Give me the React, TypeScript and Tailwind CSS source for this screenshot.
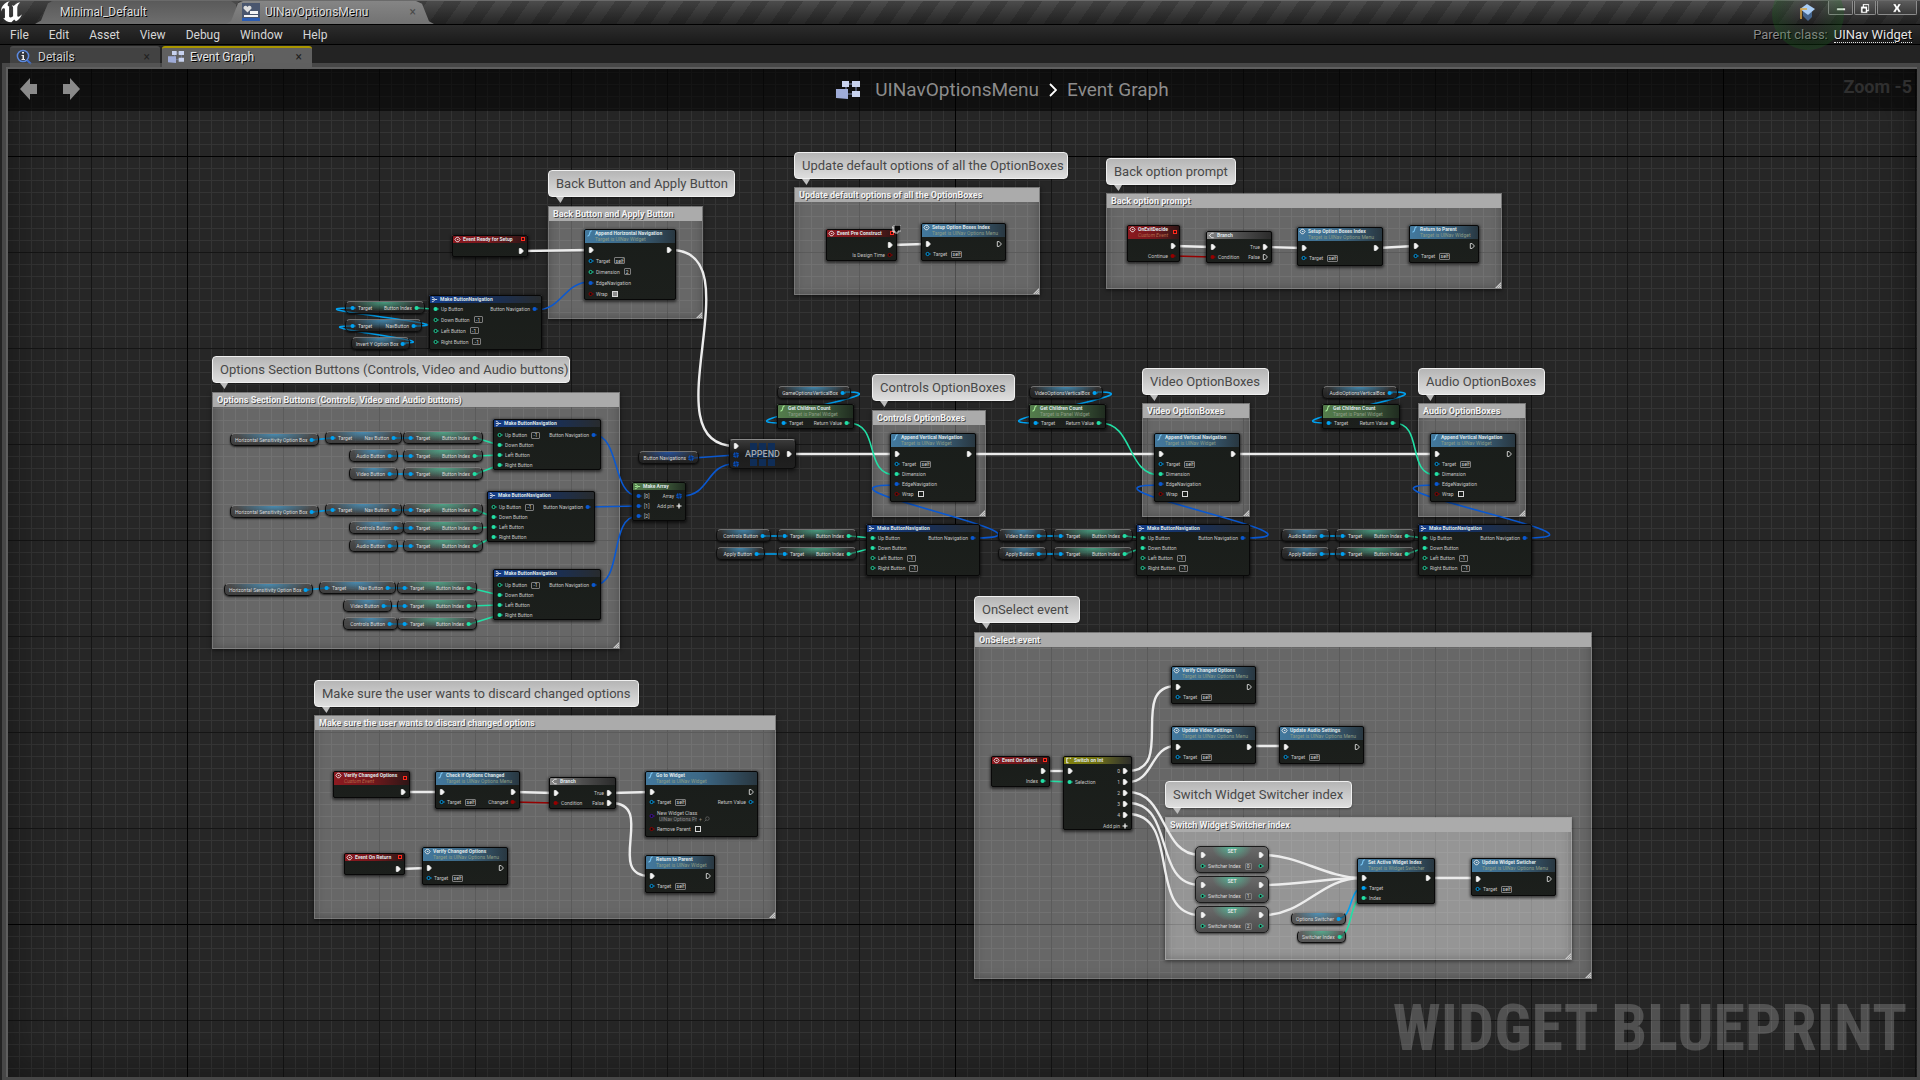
import React from "react";
import { clsx } from "clsx";

type PinColor = "white" | "sky" | "teal" | "blue" | "red" | "purple";

type Pin = {
  label?: string;
  color: PinColor;
  exec?: boolean;
  array?: boolean;
  on?: boolean;
  value?: string;
  check?: boolean;
  picker?: string;
  add?: boolean;
};

type Row = [Pin | null, Pin | null];
type Tone = "red" | "blue" | "navy" | "green" | "gray" | "yellow";
type Glyph = "event" | "fn" | "make" | "branch" | "switch";

type NodeSpec = {
  x: number;
  y: number;
  w: number;
  h: number;
  tone: Tone;
  icon: Glyph;
  title: string;
  sub?: string;
  dot?: boolean;
  row?: 10 | 11;
  pad?: 0 | 1 | 2 | 3 | 4;
  rows: Row[];
};

type PillSpec = {
  x: number;
  y: number;
  w: number;
  tone: "sky" | "teal" | "blue";
  left?: string;
  text: string;
  array?: boolean;
};

type CommentSpec = {
  x: number;
  y: number;
  w: number;
  h: number;
  title: string;
  bubbleY: number;
  bubbleW: number;
};

const hex: Record<PinColor, string> = {
  white: "#f4f4f4",
  sky: "#00a2f2",
  teal: "#22dfa5",
  blue: "#0a58d0",
  red: "#960000",
  purple: "#4a0fa8",
};

const headTone: Record<Tone, string> = {
  red: "bg-linear-to-r from-[#8d1a20] via-[#75171c] to-[#2c1415]",
  blue: "bg-linear-to-r from-[#43799e] via-[#3c6886] to-[#28363f]",
  navy: "bg-linear-to-r from-[#153f8c] via-[#162f5c] to-[#282b2d]",
  green: "bg-linear-to-r from-[#547d4c] via-[#456541] to-[#1f2b1f]",
  gray: "bg-linear-to-r from-[#8a8a8a] via-[#4e4e4e] to-[#2a2a2a]",
  yellow: "bg-linear-to-r from-[#85850f] via-[#6f700f] to-[#2b2b28]",
};

/* ---- pin shorthands ---- */
const X = (on = true, label?: string): Pin => ({ color: "white", exec: true, on, label });
const P = (color: PinColor, label: string, on = false, rest: Partial<Pin> = {}): Pin => ({ color, label, on, ...rest });
const self = (): Pin => P("sky", "Target", false, { value: "self" });
const minus = (label: string): Pin => P("teal", label, false, { value: "-1" });
const addPin: Pin = { color: "white", label: "Add pin", add: true };
const through = (out = true): Row => [X(), X(out)];

const makeNav = (x: number, y: number, w: number, h: number, linked: boolean[], row: 10 | 11, pad: 0 | 1 | 3): NodeSpec => ({
  x, y, w, h, tone: "navy", icon: "make", title: "Make ButtonNavigation", row, pad,
  rows: ["Up Button", "Down Button", "Left Button", "Right Button"].map((label, i): Row => [
    linked[i] ? P("teal", label, true) : minus(label),
    i === 0 ? P("blue", "Button Navigation", true) : null,
  ]),
});

const appendVertical = (x: number, w: number, out: boolean): NodeSpec => ({
  x, y: 433, w, h: 69, tone: "blue", icon: "fn", title: "Append Vertical Navigation", sub: "Target is UINav Widget", pad: 2,
  rows: [
    through(out),
    [self(), null],
    [P("teal", "Dimension", true), null],
    [P("blue", "EdgeNavigation", true), null],
    [P("red", "Wrap", false, { check: false }), null],
  ],
});

const childCount = (x: number, w: number): NodeSpec => ({
  x, y: 404, w, h: 25, tone: "green", icon: "fn", title: "Get Children Count", sub: "Target is Panel Widget", pad: 0,
  rows: [[P("sky", "Target", true), P("teal", "Return Value", true)]],
});

const simple = (x: number, y: number, w: number, h: number, icon: Glyph, title: string, sub: string, out = false): NodeSpec => ({
  x, y, w, h, tone: "blue", icon, title, sub, pad: 2, rows: [through(out), [self(), null]],
});

const MENU = "Target is UINav Options Menu";

const nodes: NodeSpec[] = [
  { x: 452, y: 235, w: 76, h: 22, tone: "red", icon: "event", title: "Event Ready for Setup", dot: true, pad: 3, rows: [[null, X()]] },
  {
    x: 584, y: 229, w: 92, h: 71, tone: "blue", icon: "fn", title: "Append Horizontal Navigation", sub: "Target is UINav Widget", row: 11, pad: 1,
    rows: [
      through(),
      [self(), null],
      [P("teal", "Dimension", false, { value: "2" }), null],
      [P("blue", "EdgeNavigation", true), null],
      [P("red", "Wrap", false, { check: true }), null],
    ],
  },
  makeNav(429, 295, 113, 55, [true, false, false, false], 11, 0),
  { x: 826, y: 229, w: 71, h: 32, tone: "red", icon: "event", title: "Event Pre Construct", dot: true, pad: 3, rows: [[null, X()], [null, P("red", "Is Design Time")]] },
  simple(921, 223, 85, 38, "event", "Setup Option Boxes Index", MENU),
  { x: 1127, y: 225, w: 53, h: 37, tone: "red", icon: "event", title: "OnExitDecide", sub: "Custom Event", dot: true, pad: 2, rows: [[null, X()], [null, P("red", "Continue", true)]] },
  { x: 1206, y: 231, w: 66, h: 32, tone: "gray", icon: "branch", title: "Branch", pad: 3, rows: [[X(), X(true, "True")], [P("red", "Condition", true), X(false, "False")]] },
  simple(1297, 227, 86, 39, "event", "Setup Option Boxes Index", MENU, true),
  simple(1409, 225, 70, 38, "fn", "Return to Parent", "Target is UINav Widget"),
  makeNav(493, 419, 108, 51, [false, true, true, true], 10, 3),
  makeNav(487, 491, 108, 51, [false, true, true, true], 10, 3),
  makeNav(493, 569, 108, 51, [false, true, true, true], 10, 3),
  {
    x: 632, y: 482, w: 54, h: 39, tone: "green", icon: "make", title: "Make Array", pad: 1,
    rows: [
      [P("blue", "[0]", true), P("blue", "Array", true, { array: true })],
      [P("blue", "[1]", true), addPin],
      [P("blue", "[2]", true), null],
    ],
  },
  childCount(777, 77),
  childCount(1029, 77),
  childCount(1322, 78),
  appendVertical(890, 86, true),
  appendVertical(1154, 86, true),
  appendVertical(1430, 86, false),
  makeNav(866, 524, 114, 52, [true, true, false, false], 10, 1),
  makeNav(1136, 524, 114, 52, [true, true, false, false], 10, 1),
  makeNav(1418, 524, 114, 52, [true, true, false, false], 10, 1),
  { x: 333, y: 771, w: 77, h: 27, tone: "red", icon: "event", title: "Verify Changed Options", sub: "Custom Event", dot: true, pad: 2, rows: [[null, X()]] },
  {
    x: 435, y: 771, w: 85, h: 38, tone: "blue", icon: "fn", title: "Check if Options Changed", sub: MENU, pad: 2,
    rows: [through(), [self(), P("red", "Changed", true)]],
  },
  { x: 549, y: 777, w: 67, h: 32, tone: "gray", icon: "branch", title: "Branch", pad: 3, rows: [[X(), X(true, "True")], [P("red", "Condition", true), X(true, "False")]] },
  {
    x: 645, y: 771, w: 113, h: 66, tone: "blue", icon: "fn", title: "Go to Widget", sub: "Target is UINav Widget", pad: 2,
    rows: [
      through(false),
      [self(), P("sky", "Return Value")],
      [P("purple", "New Widget Class", false, { picker: "UINav Options Pr" }), null],
      [P("red", "Remove Parent", false, { check: false }), null],
    ],
  },
  { x: 344, y: 853, w: 61, h: 22, tone: "red", icon: "event", title: "Event On Return", dot: true, pad: 3, rows: [[null, X()]] },
  simple(422, 847, 86, 38, "event", "Verify Changed Options", MENU),
  simple(645, 855, 70, 38, "fn", "Return to Parent", "Target is UINav Widget"),
  simple(1171, 666, 85, 38, "event", "Verify Changed Options", MENU),
  simple(1171, 726, 85, 38, "event", "Update Video Settings", MENU, true),
  simple(1279, 726, 85, 38, "event", "Update Audio Settings", MENU),
  { x: 991, y: 756, w: 59, h: 31, tone: "red", icon: "event", title: "Event On Select", dot: true, pad: 2, rows: [[null, X()], [null, P("teal", "Index", true)]] },
  {
    x: 1063, y: 756, w: 69, h: 74, tone: "yellow", icon: "switch", title: "Switch on Int", row: 11, pad: 1,
    rows: [
      [X(), X(true, "0")],
      [P("teal", "Selection", true), X(true, "1")],
      [null, X(true, "2")],
      [null, X(true, "3")],
      [null, X(true, "4")],
      [null, addPin],
    ],
  },
  {
    x: 1357, y: 858, w: 78, h: 46, tone: "blue", icon: "fn", title: "Set Active Widget Index", sub: "Target is Widget Switcher", pad: 1,
    rows: [through(), [P("sky", "Target", true), null], [P("teal", "Index", true), null]],
  },
  simple(1471, 858, 85, 38, "event", "Update Widget Swticher", MENU),
];

const idx = (x: number, y: number, w = 80): PillSpec => ({ x, y, w, tone: "teal", left: "Target", text: "Button Index" });
const ref = (x: number, y: number, w: number, text: string): PillSpec => ({ x, y, w, tone: "sky", text });

const pills: PillSpec[] = [
  idx(345, 301),
  { x: 345, y: 319, w: 77, tone: "sky", left: "Target", text: "NavButton" },
  ref(351, 337, 59, "Invert Y Option Box"),
  ref(230, 433, 89, "Horizontal Sensitivity Option Box"),
  { x: 325, y: 431, w: 77, tone: "sky", left: "Target", text: "Nav Button" },
  idx(403, 431), ref(349, 449, 49, "Audio Button"), idx(403, 449), ref(349, 467, 49, "Video Button"), idx(403, 467),
  ref(230, 505, 89, "Horizontal Sensitivity Option Box"),
  { x: 325, y: 503, w: 77, tone: "sky", left: "Target", text: "Nav Button" },
  idx(403, 503), ref(349, 521, 55, "Controls Button"), idx(403, 521), ref(349, 539, 49, "Audio Button"), idx(403, 539),
  ref(224, 583, 89, "Horizontal Sensitivity Option Box"),
  { x: 319, y: 581, w: 77, tone: "sky", left: "Target", text: "Nav Button" },
  idx(397, 581), ref(343, 599, 49, "Video Button"), idx(397, 599), ref(343, 617, 55, "Controls Button"), idx(397, 617),
  { x: 638, y: 451, w: 61, tone: "blue", text: "Button Navigations", array: true },
  ref(777, 386, 74, "GameOptionsVerticalBox"), ref(1029, 386, 74, "VideoOptionsVerticalBox"), ref(1322, 386, 76, "AudioOptionsVerticalBox"),
  ref(716, 529, 55, "Controls Button"), ref(716, 547, 49, "Apply Button"), idx(777, 529), idx(777, 547),
  ref(998, 529, 49, "Video Button"), ref(998, 547, 49, "Apply Button"), idx(1053, 529), idx(1053, 547),
  ref(1281, 529, 49, "Audio Button"), ref(1281, 547, 49, "Apply Button"), idx(1335, 529), idx(1335, 547),
  ref(1291, 912, 55, "Options Switcher"),
  { x: 1297, y: 930, w: 49, tone: "teal", text: "Switcher Index" },
];

const setters = [
  { y: 846, value: "0" },
  { y: 876, value: "1" },
  { y: 906, value: "2" },
];

const comments: CommentSpec[] = [
  { x: 548, y: 206, w: 155, h: 113, title: "Back Button and Apply Button", bubbleY: 170, bubbleW: 187 },
  { x: 794, y: 187, w: 246, h: 108, title: "Update default options of all the OptionBoxes", bubbleY: 152, bubbleW: 274 },
  { x: 1106, y: 193, w: 396, h: 96, title: "Back option prompt", bubbleY: 158, bubbleW: 130 },
  { x: 212, y: 392, w: 408, h: 257, title: "Options Section Buttons (Controls, Video and Audio buttons)", bubbleY: 356, bubbleW: 358 },
  { x: 872, y: 410, w: 114, h: 107, title: "Controls OptionBoxes", bubbleY: 374, bubbleW: 143 },
  { x: 1142, y: 403, w: 108, h: 114, title: "Video OptionBoxes", bubbleY: 368, bubbleW: 127 },
  { x: 1418, y: 403, w: 108, h: 114, title: "Audio OptionBoxes", bubbleY: 368, bubbleW: 127 },
  { x: 314, y: 715, w: 462, h: 204, title: "Make sure the user wants to discard changed options", bubbleY: 680, bubbleW: 325 },
  { x: 974, y: 632, w: 618, h: 347, title: "OnSelect event", bubbleY: 596, bubbleW: 106 },
  { x: 1165, y: 817, w: 407, h: 143, title: "Switch Widget Switcher index", bubbleY: 781, bubbleW: 187 },
];

const line = (x1: number, y1: number, x2: number, y2: number) => `M${x1} ${y1}L${x2} ${y2}`;
const curve = (x1: number, y1: number, x2: number, y2: number, a: number, b = a) =>
  `M${x1} ${y1}C${x1 + a} ${y1} ${x2 - b} ${y2} ${x2} ${y2}`;

const wires: { color: PinColor; width: number; paths: string[] }[] = [
  {
    color: "white", width: 2,
    paths: [
      line(523, 251, 590, 250),
      curve(671, 250, 735, 446, 86, 88),
      line(792, 454, 895, 454), line(972, 454, 1159, 454), line(1236, 454, 1435, 454),
      line(891, 245, 925, 244), line(1175, 246, 1211, 247), line(1267, 247, 1302, 248), line(1378, 248, 1414, 246),
      line(405, 792, 440, 792), line(515, 792, 554, 793), line(611, 793, 650, 792), line(400, 869, 427, 868),
      curve(611, 803, 650, 876, 46),
      line(1045, 771, 1068, 771), line(1251, 746, 1284, 746),
      curve(1128, 771, 1176, 686, 48), curve(1128, 782, 1176, 746, 26),
      curve(1128, 792, 1200, 855, 40), curve(1128, 803, 1200, 885, 48), curve(1128, 814, 1200, 915, 54),
      curve(1264, 855, 1361, 878, 34), curve(1264, 885, 1361, 878, 34), curve(1264, 915, 1361, 878, 40),
      line(1430, 878, 1476, 878),
    ],
  },
  { color: "red", width: 1, paths: [line(1175, 256, 1211, 257), line(514, 802, 554, 803)] },
  {
    color: "sky", width: 1,
    paths: [
      curve(413, 326, 351, 308, 68), curve(402, 343, 351, 326, 54),
      line(312, 440, 331, 438), line(395, 438, 409, 438), line(391, 456, 409, 456), line(391, 474, 409, 474),
      line(312, 512, 331, 510), line(395, 510, 409, 510), line(396, 528, 409, 528), line(391, 546, 409, 546),
      line(306, 590, 325, 588), line(389, 588, 403, 588), line(385, 606, 403, 606), line(390, 624, 403, 624),
      curve(845, 392, 781, 423, 68), curve(1097, 392, 1033, 423, 68), curve(1391, 392, 1327, 423, 68),
      line(764, 536, 782, 536), line(758, 554, 782, 554),
      line(1040, 536, 1058, 536), line(1040, 554, 1058, 554), line(1322, 536, 1340, 536), line(1322, 554, 1340, 554),
      curve(1339, 918, 1363, 888, 14),
    ],
  },
  {
    color: "teal", width: 1,
    paths: [
      line(417, 308, 434, 309),
      line(476, 438, 499, 445), line(476, 456, 499, 455), line(476, 474, 499, 465),
      line(476, 510, 493, 517), line(476, 528, 493, 527), line(476, 546, 493, 537),
      line(470, 588, 499, 595), line(470, 606, 499, 605), line(470, 624, 499, 615),
      curve(848, 423, 896, 475, 34), curve(1100, 423, 1160, 475, 34), curve(1394, 423, 1436, 475, 30),
      line(849, 536, 872, 538), line(849, 554, 872, 548),
      line(1125, 536, 1142, 538), line(1125, 554, 1142, 548),
      line(1407, 536, 1424, 538), line(1407, 554, 1424, 548),
      line(1045, 781, 1068, 782), curve(1339, 936, 1363, 898, 14),
    ],
  },
  {
    color: "blue", width: 1,
    paths: [
      curve(536, 310, 590, 282, 26),
      curve(975, 538, 896, 485, 105), curve(1245, 538, 1160, 485, 105), curve(1527, 538, 1436, 485, 105),
      curve(594, 435, 638, 496, 26), line(588, 507, 638, 506), curve(594, 585, 638, 516, 30),
      line(694, 458, 734, 455), curve(682, 496, 734, 464, 28),
    ],
  },
];

function PinMark({ pin }: { pin: Pin }) {
  const c = hex[pin.color];
  if (pin.exec) {
    return (
      <svg viewBox="0 0 6 6" className="size-1.5 shrink-0" aria-hidden="true">
        <path d="M1.3 .6H3.2L5.4 3 3.2 5.4H1.3Z" fill={pin.on ? c : "none"} stroke={c} strokeWidth=".8" strokeLinejoin="round" />
      </svg>
    );
  }
  if (pin.array) {
    return (
      <svg viewBox="0 0 6 6" className="size-1.5 shrink-0" aria-hidden="true">
        <path d="M1 1H5V5H1Z" fill="#0a2f6b" stroke={c} strokeWidth="1.2" strokeDasharray="1.4 .6" />
      </svg>
    );
  }
  return (
    <svg viewBox="0 0 6 6" className="size-1.5 shrink-0" aria-hidden="true">
      <circle cx="2.6" cy="3" r={pin.on ? 2.1 : 1.6} fill={pin.on ? c : "#0b0f0d"} stroke={c} strokeWidth={pin.on ? 0 : 0.9} />
      <path d="M4.7 2.1L5.9 3 4.7 3.9Z" fill={c} />
    </svg>
  );
}

function PinView({ pin, side }: { pin: Pin | null; side: "in" | "out" }) {
  if (!pin) return <span />;
  if (pin.add) {
    return (
      <button type="button" className="flex items-center gap-0.5">
        {pin.label}
        <svg viewBox="0 0 6 6" className="size-1.5" aria-hidden="true">
          <path d="M3 .5V5.5M.5 3H5.5" stroke="#fff" strokeWidth="1.2" />
        </svg>
      </button>
    );
  }
  return (
    <div className={clsx("flex items-center gap-0.5", side === "out" && "flex-row-reverse")}>
      <PinMark pin={pin} />
      {pin.picker ? (
        <div className="flex flex-col leading-[6px]">
          <span>{pin.label}</span>
          <span className="ml-0.5 flex items-center gap-0.5 text-[#8b8b8b]">
            <select aria-label={pin.label} className="h-1.5 w-[38px] appearance-none bg-[#2a2d2b] leading-[6px] text-[#8b8b8b]">
              <option>{pin.picker}</option>
            </select>
            +
            <svg viewBox="0 0 6 6" className="size-1.5" aria-hidden="true">
              <circle cx="3.4" cy="2.6" r="1.8" fill="none" stroke="#6b6b6b" strokeWidth=".7" />
              <path d="M2 4L.6 5.4" stroke="#6b6b6b" strokeWidth=".8" />
            </svg>
          </span>
        </div>
      ) : (
        pin.label && <span>{pin.label}</span>
      )}
      {pin.value && (
        <input
          aria-label={`${pin.label} value`}
          defaultValue={pin.value}
          className={clsx(
            "ml-0.5 h-[7px] rounded-[1px] border border-[#7c7c7c] bg-transparent p-0 text-center text-[5px] leading-[5px] text-[#d8d8d8]",
            pin.value === "self" ? "w-[11px]" : pin.value === "-1" ? "w-[9px]" : "w-[7px]",
          )}
        />
      )}
      {pin.check !== undefined && (
        <input
          type="checkbox"
          aria-label={pin.label}
          defaultChecked={pin.check}
          className="ml-0.5 size-1.5 appearance-none border border-[#d6d6d6] bg-transparent checked:bg-[#8c8c8c]"
        />
      )}
    </div>
  );
}

function NodeGlyph({ icon, tone }: { icon: Glyph; tone: Tone }) {
  const c = tone === "green" ? "#a9f09a" : icon === "fn" ? "#7cc8f5" : "#e8e8e8";
  return (
    <svg viewBox="0 0 8 8" className="size-[7px] shrink-0" fill="none" stroke={c} strokeWidth="1" aria-hidden="true">
      {icon === "event" && <path d="M3 1.4L1 4 3 6.6M5 1.4L7 4 5 6.6M3 1.4H5M3 6.6H5M3.4 4H5" />}
      {icon === "fn" && <path d="M6.6 1.2C4.6.6 4.6 2.4 4.2 4S3.6 7.2 1.6 6.8" strokeWidth="1.2" />}
      {icon === "make" && <path d="M1 1.5H2.5L4.5 4H7M1 4H4M1 6.5H2.5L4.5 4" />}
      {icon === "branch" && <path d="M6.5 1.4H4L1.8 4 4 6.6H6.5M1 4H2" />}
      {icon === "switch" && <path d="M4 1.5H2V6.5H4M5.2 1.5H7" strokeWidth="1.2" />}
    </svg>
  );
}

function GraphNode({ n }: { n: NodeSpec }) {
  return (
    <article
      className="absolute flex flex-col overflow-hidden rounded-[2px] bg-linear-to-b from-[#191d1a] to-[#1c1f1c] text-[5px] leading-[6px] whitespace-nowrap text-[#c4c4c4] shadow-[0_1px_3px_1px_rgba(0,0,0,0.6)] outline -outline-offset-1 outline-[#080808]"
      style={{ left: n.x, top: n.y, width: n.w, height: n.h }}
    >
      <header
        className={clsx(
          "flex shrink-0 items-start gap-0.5 border-t border-white/20 pl-0.5",
          headTone[n.tone],
          n.sub ? "h-3.5" : "h-2",
        )}
      >
        <NodeGlyph icon={n.icon} tone={n.tone} />
        <div className="flex flex-1 flex-col font-bold text-[#dfe5e8]">
          <h3>{n.title}</h3>
          {n.sub && <p className={clsx("font-normal", n.tone === "red" ? "text-[#b06a4a] italic" : "text-[#8d9d86]")}>{n.sub}</p>}
        </div>
        {n.dot && <span className={clsx("mr-[3px] size-1 border border-[#ff2a1c] bg-[#3a0a0a]", n.sub ? "mt-1" : "mt-px")} />}
      </header>
      <div
        className={clsx(
          "flex flex-col px-1",
          n.pad === 1 && "pt-px",
          n.pad === 2 && "pt-0.5",
          n.pad === 3 && "pt-[3px]",
        )}
      >
        {n.rows.map(([i, o], k) => (
          <div
            key={k}
            className={clsx("flex items-center justify-between", i?.picker ? "h-[17px]" : n.row === 11 ? "h-[11px]" : "h-2.5")}
          >
            <PinView pin={i} side="in" />
            <PinView pin={o} side="out" />
          </div>
        ))}
      </div>
    </article>
  );
}

const pillTone = {
  sky: "bg-[radial-gradient(ellipse_at_top,rgba(70,160,210,0.75),transparent_62%),linear-gradient(#3c3c3c99,#1a1a1a88)]",
  teal: "bg-[radial-gradient(ellipse_at_top,rgba(80,200,160,0.7),transparent_62%),linear-gradient(#3c3c3c99,#1a1a1a88)]",
  blue: "bg-[radial-gradient(ellipse_at_top,rgba(30,90,190,0.75),transparent_62%),linear-gradient(#3c3c3c99,#1a1a1a88)]",
};

function Pill({ p }: { p: PillSpec }) {
  return (
    <div
      className={clsx(
        "absolute flex h-[13px] items-center justify-between rounded-[5px] border border-t-[#a9a9a9]/60 border-[#0d0d0d] px-1 text-[5px] leading-[6px] whitespace-nowrap text-[#d8d8d8] shadow-[0_1px_2px_rgba(0,0,0,0.7)]",
        pillTone[p.tone],
      )}
      style={{ left: p.x, top: p.y, width: p.w }}
    >
      {p.left && (
        <span className="flex items-center gap-0.5">
          <PinMark pin={{ color: "sky", on: true }} />
          {p.left}
        </span>
      )}
      <span className="ml-auto flex items-center gap-0.5">
        {p.text}
        <PinMark pin={{ color: p.tone, on: true, array: p.array }} />
      </span>
    </div>
  );
}

function Setter({ y, value }: { y: number; value: string }) {
  return (
    <article
      className="absolute left-[1195px] flex h-[27px] w-[74px] flex-col rounded-[5px] border border-[#1b1b1b] bg-[radial-gradient(ellipse_at_top,rgba(80,200,160,0.8),transparent_40%),linear-gradient(#6a6a6a,#4c4c4c)] px-1 text-[5px] leading-[6px] text-[#dedede] shadow-[0_1px_3px_rgba(0,0,0,0.7)]"
      style={{ top: y }}
    >
      <h3 className="h-1 pt-px text-center font-bold">SET</h3>
      <div className="flex h-2 items-center justify-between">
        <PinMark pin={X()} />
        <PinMark pin={X()} />
      </div>
      <div className="mt-0.5 flex h-2.5 items-center justify-between">
        <PinView pin={P("teal", "Switcher Index", false, { value })} side="in" />
        <PinMark pin={{ color: "teal" }} />
      </div>
    </article>
  );
}

function AppendNode() {
  return (
    <article className="absolute top-[439px] left-[729px] flex h-[30px] w-[67px] items-center justify-between rounded-[4px] border border-t-[#8a8a8a] border-[#0c0c0c] bg-linear-to-b from-[#3a3a3a] via-[#1c1c1c] to-[#202020] px-[3px] shadow-[0_1px_4px_1px_rgba(0,0,0,0.6)]">
      <div className="flex h-full flex-col gap-[3px] pt-[3px]">
        <PinMark pin={X()} />
        <PinMark pin={{ color: "blue", array: true }} />
        <PinMark pin={{ color: "blue", array: true }} />
      </div>
      <div className="grid place-items-center">
        <div className="col-start-1 row-start-1 grid grid-cols-3 gap-x-0.5 gap-y-px">
          {Array.from({ length: 9 }, (_, i) => (
            <span key={i} className="size-[7px] bg-[#0f2d57]" />
          ))}
        </div>
        <h3 className="col-start-1 row-start-1 text-[9px] leading-3 font-medium text-[#a3a8ae]">APPEND</h3>
      </div>
      <PinMark pin={X()} />
    </article>
  );
}

function CommentBox({ c }: { c: CommentSpec }) {
  return (
    <section
      className="absolute border border-white/10 bg-white/30 shadow-[0_1px_4px_rgba(0,0,0,0.6),inset_0_0_10px_rgba(0,0,0,0.25)]"
      style={{ left: c.x, top: c.y, width: c.w, height: c.h }}
    >
      <h2 className="h-3.5 overflow-hidden bg-[#ababab] pl-1 text-[9px] leading-[14px] font-bold whitespace-nowrap text-[#f2f2f2] [text-shadow:1px_1px_0_#4a4a4a]">
        {c.title}
      </h2>
      <svg viewBox="0 0 6 6" className="absolute right-0 bottom-0 size-1.5" aria-hidden="true">
        <path d="M6 0V6H0Z" fill="#c9c9c9" />
        <path d="M6 2L2 6M6 4L4 6" stroke="#777" strokeWidth=".6" />
      </svg>
    </section>
  );
}

function Bubble({ c }: { c: CommentSpec }) {
  return (
    <div className="absolute" style={{ left: c.x, top: c.bubbleY, width: c.bubbleW }}>
      <p className="h-[27px] rounded-[4px] border border-[#f0f0f0] bg-linear-to-b from-[#b5b5b5] to-[#dedede] pl-[7px] text-[13px] leading-[25px] whitespace-nowrap text-[#484848] shadow-[0_1px_2px_rgba(0,0,0,0.4)]">
        {c.title}
      </p>
      <svg viewBox="0 0 8 6" className="ml-2 h-1.5 w-2" aria-hidden="true">
        <path d="M0 0H8L4.5 6Z" fill="#bdbdbd" />
      </svg>
    </div>
  );
}

function GraphIcon({ className }: { className: string }) {
  return (
    <svg viewBox="0 0 24 20" className={className} aria-hidden="true">
      <path d="M12 4H18M12 14H18M10 4V14M20 4V14" stroke="#7f8db5" strokeWidth="1" />
      <path d="M6 1H13V7H6ZM16 1H24V7H16ZM16 11H24V17H16Z" fill="#c8d2ee" />
      <path d="M0 9H12V19L0 18Z" fill="#9facd8" />
    </svg>
  );
}

function Arrow({ flip }: { flip?: boolean }) {
  return (
    <svg viewBox="0 0 18 24" className={clsx("h-6 w-[18px]", flip && "-scale-x-100")} aria-hidden="true">
      <path d="M0 12L10 1V7H17V17H10V23Z" fill="#8a8a8a" />
    </svg>
  );
}

const shade = "[text-shadow:1px_1px_0_#000]";

function TitleBar() {
  return (
    <header className="relative flex h-[25px] items-end border-t border-b border-t-[#6a6a6a] border-b-black bg-[repeating-linear-gradient(125deg,rgba(0,0,0,0.16)_0_14px,transparent_14px_28px),linear-gradient(#4c4c4c,#262626)]">
      <svg viewBox="4 5 16 15" className="mr-3 h-[23px] w-[23px] shrink-0 self-center" aria-label="Unreal Engine" role="img">
        <path
          fill="#fff"
          d="M19.13 13.729c-.206.997-1.126 3.557-4.06 4.942l-1.179-1.325-1.988 2a7.338 7.338 0 01-5.804-2.978 2.859 2.859 0 00.65.123c.326.006.678-.114.678-.66v-5.394a.89.89 0 00-1.116-.89c-.92.212-1.656 2.509-1.656 2.509a7.304 7.304 0 012.528-5.597 7.408 7.408 0 013.73-1.721c-1.006.573-1.57 1.507-1.57 2.29 0 1.262.76 1.109.984.923v7.28a1.157 1.157 0 00.148.256 1.075 1.075 0 00.88.445c.76 0 1.747-.868 1.747-.868V9.172c0-.6-.452-1.324-.905-1.572 0 0 .838-.149 1.484.346a5.537 5.537 0 01.387-.425c1.508-1.48 2.929-1.902 4.112-2.112 0 0-2.151 1.69-2.151 3.96 0 1.687.043 5.801.043 5.801.799.771 1.986-.342 3.059-1.441z"
        />
      </svg>
      <nav className="flex h-full text-xs text-[#dcdcdc]" aria-label="Open assets">
        <button
          type="button"
          className={clsx(
            "flex h-full w-[205px] items-center bg-linear-to-b from-[#5a5a5a] to-[#6e6e6e] pb-px pl-[25px] [clip-path:polygon(0_100%,6px_85%,13px_10%,18px_0,196px_0,201px_15%,205px_100%)]",
            shade,
          )}
        >
          Minimal_Default
        </button>
        <button
          type="button"
          className={clsx(
            "-ml-3.5 flex h-full w-[208px] items-center gap-[5px] bg-linear-to-b from-[#858585] to-[#727272] pr-[18px] pb-px pl-[16px] [clip-path:polygon(0_100%,5px_88%,12px_10%,17px_0,190px_0,196px_12%,203px_88%,208px_100%)]",
            shade,
          )}
        >
          <svg viewBox="0 0 18 18" className="size-[18px]" aria-hidden="true">
            <path d="M0 0H18V18H0Z" fill="#4a566e" />
            <path d="M0 15H18V18H0Z" fill="#2c5cb0" />
            <path d="M5.5 9.5L1.5 5.5C1 3 4 1.5 5.5 4 7 1.5 10 3 9.5 5.5Z" fill="#dedede" />
            <path d="M8 8H16V11H8ZM2 12H16V14H2Z" fill="#f4f4f4" />
          </svg>
          UINavOptionsMenu
          <span className="ml-auto text-[#4a4a4a] [text-shadow:none]">×</span>
        </button>
      </nav>
      <div className="ml-auto flex h-full gap-px">
        <button type="button" aria-label="Tutorials" className="mr-3 flex items-center">
          <svg viewBox="0 0 16 18" className="h-[18px] w-4" aria-hidden="true">
            <path d="M4 7L13 8V13L9 17 4 12Z" fill="#44648c" />
            <path d="M1 5L8 0 16 5 9 11Z" fill="#a9cdf5" />
            <path d="M8 5L2 5V15" fill="none" stroke="#d9a441" strokeWidth="1.5" />
          </svg>
        </button>
        {[
          { name: "Minimize", w: "w-[25px]", d: "M3 7H13V10H3Z" },
          { name: "Restore", w: "w-[22px]", d: "M5 2H13V11H11V13H3V5H5ZM7 4V5H11V9H11.5V4ZM5.5 8V11H8.5V8Z" },
          { name: "Close", w: "w-10", d: "M3 2H6.5L8 5 9.5 2H13L10 7 13 12H9.5L8 9 6.5 12H3L6 7Z" },
        ].map((b) => (
          <button
            key={b.name}
            type="button"
            aria-label={b.name}
            className={clsx("flex h-3.5 items-center justify-center rounded-b-[2px] border border-t-0 border-[#8c8c8c] bg-linear-to-b from-[#5c5c5c] to-[#3a3a3a]", b.w)}
          >
            <svg viewBox="0 0 16 14" className="h-3 w-3.5" aria-hidden="true">
              <path d={b.d} fill="#fff" fillRule="evenodd" stroke="#111" strokeWidth=".5" />
            </svg>
          </button>
        ))}
        <span className="w-0.5" />
      </div>
      <span className="pointer-events-none absolute -top-[23px] right-[76px] size-[72px] rounded-full bg-[radial-gradient(circle,rgba(20,90,20,0)_20%,rgba(20,110,25,0.4)_100%)]" />
    </header>
  );
}

function PanelTab({ active, label, icon }: { active?: boolean; label: string; icon: React.ReactNode }) {
  return (
    <button
      type="button"
      role="tab"
      aria-selected={!!active}
      className={clsx(
        "flex h-[21px] w-[150px] items-center gap-1.5 rounded-t-[3px] border-t-2 pr-2.5 pb-0.5 pl-1.5 text-xs",
        shade,
        active ? "border-t-[#a89400] bg-[#606060] text-[#e6e6e6]" : "border-t-[#4a4a4a] bg-[#424242] text-[#cfcfcf]",
      )}
    >
      {icon}
      {label}
      <span className="ml-auto text-[#222] [text-shadow:none]">×</span>
    </button>
  );
}

export default function App() {
  return (
    <div className="flex h-screen flex-col overflow-hidden bg-[#232323] font-['Roboto',sans-serif]">
      <TitleBar />
      <div className={clsx("flex h-5 items-center border-b border-black bg-linear-to-b from-[#2c2c2c] to-[#1a1a1a] pr-2 pl-2.5 text-xs text-[#d6d6d6]", shade)}>
        <nav className="flex gap-5" aria-label="Main menu">
          {["File", "Edit", "Asset", "View", "Debug", "Window", "Help"].map((m) => (
            <button key={m} type="button">
              {m}
            </button>
          ))}
        </nav>
        <p className="ml-auto text-[13px] leading-4 text-[#8a8a8a]">
          Parent class:
          <a href="#parent" className="ml-1.5 border-b border-dotted border-[#e4e4e4] text-[#e4e4e4]">
            UINav Widget
          </a>
        </p>
      </div>
      <div role="tablist" className="flex h-[22px] items-end gap-0.5 pl-2.5">
        <PanelTab
          label="Details"
          icon={
            <svg viewBox="0 0 16 16" className="size-4" aria-hidden="true">
              <path d="M11 11L15 15" stroke="#3f6fd0" strokeWidth="2" />
              <circle cx="7" cy="7" r="5.6" fill="#33363c" stroke="#5c8ae0" strokeWidth="1.5" />
              <path d="M6 3H8V4.5H6ZM5.5 6H8V10H9V11H5.500V10H6.5V7H5.5Z" fill="#eee" />
            </svg>
          }
        />
        <PanelTab active label="Event Graph" icon={<GraphIcon className="h-3.5 w-4" />} />
      </div>
      <main className="relative mr-[3px] mb-[3px] ml-1.5 flex-1 overflow-hidden border-t-2 border-l-2 border-[#5f5f5f] bg-[#262626] outline-4 outline-[#5f5f5f]/60">
        <div className="absolute inset-0 bg-[linear-gradient(90deg,#000_1px,transparent_1px),linear-gradient(#000_1px,transparent_1px),linear-gradient(90deg,#151515_1px,transparent_1px),linear-gradient(#151515_1px,transparent_1px),linear-gradient(90deg,#343434_1px,transparent_1px),linear-gradient(#343434_1px,transparent_1px)] bg-size-[768px_768px,768px_768px,96px_96px,96px_96px,12px_12px,12px_12px] bg-position-[179px_0,0_87px,83px_0,0_87px,11px_0,0_3px]" />

        <div className="absolute -top-[69px] -left-2 h-[1080px] w-[1920px]">
          {comments.map((c) => (
            <CommentBox key={c.title} c={c} />
          ))}
          <svg viewBox="0 0 1920 1080" className="absolute inset-0 h-[1080px] w-[1920px]" fill="none" aria-hidden="true">
            {wires.map((g) => (
              <g key={g.color} stroke={g.color === "white" ? "#ececec" : hex[g.color]} strokeWidth={g.width === 2 ? 2.4 : 1.6}>
                {g.paths.map((d) => (
                  <path key={d} d={d} />
                ))}
              </g>
            ))}
          </svg>
          {pills.map((p) => (
            <Pill key={`${p.x}-${p.y}`} p={p} />
          ))}
          {nodes.map((n) => (
            <GraphNode key={`${n.x}-${n.y}`} n={n} />
          ))}
          {setters.map((s) => (
            <Setter key={s.value} y={s.y} value={s.value} />
          ))}
          <AppendNode />
          <svg viewBox="0 0 9 9" className="absolute top-[225px] left-[892px] size-[9px]" aria-hidden="true">
            <path d="M2 0H9V6H6V8H3V6H2Z" fill="#0a0a0a" stroke="#ddd" strokeWidth=".8" />
            <path d="M0 2H1V7H3" stroke="#eee" fill="none" />
          </svg>
          {comments.map((c) => (
            <Bubble key={c.title} c={c} />
          ))}
        </div>

        <div className="pointer-events-none absolute inset-0 shadow-[inset_0_0_50px_rgba(0,0,0,0.45)]" />
        <p className="pointer-events-none absolute right-2.5 bottom-4 font-['Roboto_Condensed','Roboto',sans-serif] text-[64px] leading-[64px] font-bold whitespace-nowrap text-white/20">
          WIDGET BLUEPRINT
        </p>
        <div className="relative flex h-[42px] items-center bg-black/55 pl-3">
          <div className="flex gap-6 pb-0.5">
            <button type="button" aria-label="Back">
              <Arrow />
            </button>
            <button type="button" aria-label="Forward">
              <Arrow flip />
            </button>
          </div>
          <h1 className="flex flex-1 items-center justify-center pl-2 text-[19px] leading-6 text-[#8c8c8c]">
            <GraphIcon className="mr-[15px] h-5 w-6" />
            UINavOptionsMenu
            <svg viewBox="0 0 8 14" className="mx-2.5 h-3.5 w-2" fill="none" aria-hidden="true">
              <path d="M1 1L7 7 1 13" stroke="#fff" strokeWidth="1.8" />
            </svg>
            Event Graph
          </h1>
          <p className="absolute top-1.5 right-[5px] text-[18px] leading-6 font-bold text-[#2f2f2f]">Zoom -5</p>
        </div>
      </main>
    </div>
  );
}
